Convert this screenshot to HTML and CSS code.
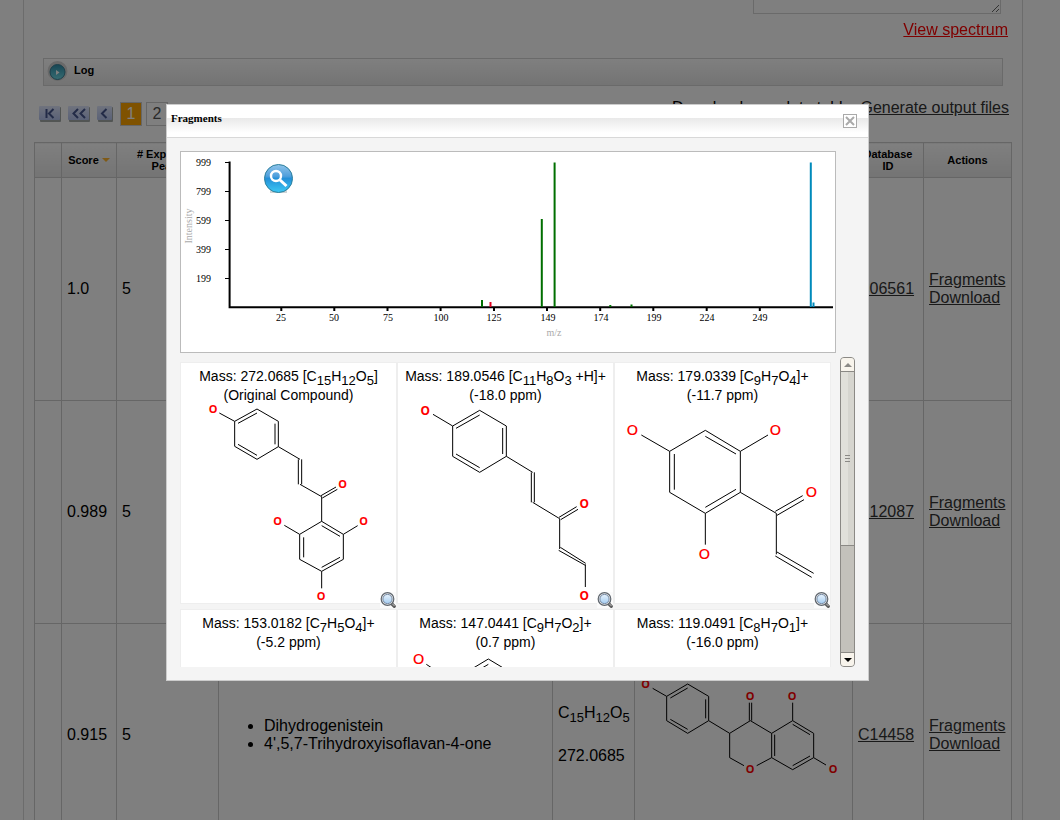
FILE: index.html
```html
<!DOCTYPE html>
<html lang="en">
<head>
<meta charset="utf-8">
<title>Fragments</title>
<link rel="stylesheet" href="styles.css">
</head>
<body>
<svg class="defs" width="0" height="0" aria-hidden="true">
  <defs>
    <linearGradient id="lensGlass" x1="0" y1="0" x2="0" y2="1"><stop offset="0" stop-color="#e8f3fd"/><stop offset="1" stop-color="#a5cdf1"/></linearGradient>
    <linearGradient id="blueBall" x1="0" y1="0" x2="0" y2="1"><stop offset="0" stop-color="#8fc4ea"/><stop offset=".42" stop-color="#4f9fdc"/><stop offset=".5" stop-color="#2490d8"/><stop offset="1" stop-color="#3cc8f4"/></linearGradient>
    <linearGradient id="tealBall" x1="0" y1="0" x2="0" y2="1"><stop offset="0" stop-color="#2c8ca8"/><stop offset="1" stop-color="#6fd8e4"/></linearGradient>
    <linearGradient id="navFill" x1="0" y1="0" x2="0" y2="1"><stop offset="0" stop-color="#dfe6fb"/><stop offset="1" stop-color="#b4c3ee"/></linearGradient>
    <symbol id="lens" viewBox="0 0 16 16">
      <rect width="16" height="16" fill="#fbfbfb"/>
      <path d="M11.500 11.500l2.800 2.800" stroke="#5d5d5d" stroke-width="3.200" stroke-linecap="round"/>
      <path d="M11.500 11l3 3" stroke="#c4c4c4" stroke-width="1"/>
      <circle cx="7.500" cy="7" r="6.300" fill="#eee" stroke="#5f666e" stroke-width="1.200"/>
      <circle cx="7.500" cy="7" r="4.600" fill="url(#lensGlass)" stroke="#7388a3" stroke-width="1"/>
    </symbol>
  </defs>
</svg>

<main class="page">
  <div class="entry"><textarea class="peaks" aria-label="Peak list"></textarea></div>
  <div class="spectrum-link"><a href="#spectrum">View spectrum</a></div>

  <button class="log" type="button">
    <svg width="22" height="22" viewBox="0 0 22 22" aria-hidden="true">
      <circle cx="10.500" cy="10" r="10" fill="#d2d2d2"/>
      <circle cx="10.500" cy="11" r="7.500" fill="url(#tealBall)" stroke="#3a7f96"/>
      <path d="M9 9l3.500 2.500L9 14z" fill="#fff"/>
    </svg>
    <span>Log</span>
  </button>

  <div class="toolbar">
    <nav class="pager" aria-label="Result pages">
      <button class="step" type="button" aria-label="First page"><svg width="22" height="16" viewBox="0 0 22 16"><rect x="1" y="1" width="21" height="15" rx="1" fill="#a4aaa9"/><rect width="21" height="14" rx="1" fill="url(#navFill)"/><path d="M7.500 3v9M14.500 3L10 7.500l4.500 4.500" fill="none" stroke="#46578f" stroke-width="2"/></svg></button>
      <button class="step" type="button" aria-label="Back ten pages"><svg width="22" height="16" viewBox="0 0 22 16"><rect x="1" y="1" width="21" height="15" rx="1" fill="#a4aaa9"/><rect width="21" height="14" rx="1" fill="url(#navFill)"/><path d="M10 3L5.500 7.500 10 12M17 3l-4.500 4.500L17 12" fill="none" stroke="#46578f" stroke-width="2"/></svg></button>
      <button class="step" type="button" aria-label="Previous page"><svg width="16" height="16" viewBox="0 0 16 16"><rect x="1" y="1" width="15" height="15" rx="1" fill="#a4aaa9"/><rect width="15" height="14" rx="1" fill="url(#navFill)"/><path d="M9.500 3L5 7.500 9.500 12" fill="none" stroke="#46578f" stroke-width="2"/></svg></button>
      <a class="num current" href="#p1">1</a>
      <a class="num" href="#p2">2</a>
    </nav>
    <div class="export">Download complete table: <a href="#output">Generate output files</a></div>
  </div>

  <table class="results">
    <colgroup><col class="c-mark"><col class="c-score"><col class="c-peaks"><col><col class="c-formula"><col class="c-structure"><col class="c-id"><col class="c-actions"></colgroup>
    <thead>
      <tr><th></th><th>Score <span class="sort"></span></th><th># Explained Peaks</th><th>Name</th><th>Formula</th><th>Structure</th><th>Database ID</th><th>Actions</th></tr>
    </thead>
    <tbody>
      <tr><td></td><td>1.0</td><td>5</td><td></td><td></td><td></td><td><a href="#c06561">C06561</a></td><td><a href="#f1">Fragments</a><br><a href="#d1">Download</a></td></tr>
      <tr><td></td><td>0.989</td><td>5</td><td></td><td></td><td></td><td><a href="#c12087">C12087</a></td><td><a href="#f2">Fragments</a><br><a href="#d2">Download</a></td></tr>
      <tr><td></td><td>0.915</td><td>5</td>
        <td><ul><li>Dihydrogenistein</li><li>4',5,7-Trihydroxyisoflavan-4-one</li></ul></td>
        <td><p>C<sub>15</sub>H<sub>12</sub>O<sub>5</sub></p><p>272.0685</p></td>
        <td class="drawing">
          <svg class="mol" viewBox="15 -138 651 666" role="img" aria-label="Dihydrogenistein structure">
            <path d="M68 55L110 79V152L173 190 236 152V79L173 42 110 79M121 84L173 54M121 148L173 178M227 88V145M236 152L299 190 361 152 425 190V263L380 287M299 190V263L342 287M358 98V152M365 98V152M434 194V258M425 190L488 152 551 190V263L488 299 425 263M488 163L540 194M488 287L540 258M488 98V152M551 263L588 285"/>
            <g class="bold"><text x="47" y="54">O</text><text x="360" y="90">O</text><text x="486" y="90">O</text><text x="360" y="309">O</text><text x="609" y="309">O</text></g>
          </svg>
        </td>
        <td><a href="#c14458">C14458</a></td><td><a href="#f3">Fragments</a><br><a href="#d3">Download</a></td></tr>
    </tbody>
  </table>
</main>

<div class="overlay">
  <section class="modal" role="dialog" aria-labelledby="title">
    <header class="modal-head">
      <h1 id="title">Fragments</h1>
      <button type="button" aria-label="Close"><svg width="14" height="14" viewBox="0 0 14 14"><rect x=".5" y=".5" width="13" height="13" fill="#fff" stroke="#aaa"/><path d="M3 3l8 8M11 3l-8 8" stroke="#aaa" stroke-width="2"/></svg></button>
    </header>
    <div class="modal-body">
      <div class="chart">
        <svg viewBox="181 152 654 200" role="img" aria-label="Spectrum, intensity against m/z">
          <g stroke="#000" stroke-width="2" fill="none">
            <path d="M229.600 161.500V308M228.600 307.300H833"/>
            <path d="M281.300 308v3M334.300 308v3M387.500 308v3M440.600 308v3M494 308v3M547 308v3M600.200 308v3M653.300 308v3M706.700 308v3M759.800 308v3"/>
            <path stroke-width="1" d="M225 162.500h4M225 191.500h4M225 220.500h4M225 249.500h4M225 278.500h4"/>
          </g>
          <g fill="none" stroke-width="2">
            <path stroke="#006f00" d="M482 300v7M541.800 219v88M554.600 162.500V307M610.300 305v2M631.500 304.500V307"/>
            <path stroke="#e00020" d="M490.500 302v5"/>
            <path stroke="#008abb" d="M810.800 162.500V307M813.500 302.500V307"/>
          </g>
          <g class="ticks">
            <text x="211" y="166">999</text><text x="211" y="195">799</text><text x="211" y="224">599</text><text x="211" y="253">399</text><text x="211" y="282">199</text>
          </g>
          <g class="marks">
            <text x="281" y="321">25</text><text x="334" y="321">50</text><text x="388" y="321">75</text><text x="441" y="321">100</text><text x="494" y="321">125</text><text x="548" y="321">149</text><text x="601" y="321">174</text><text x="654" y="321">199</text><text x="707" y="321">224</text><text x="760" y="321">249</text>
          </g>
          <g class="axis"><text x="554" y="336">m/z</text><text transform="translate(192 226) rotate(-90)">Intensity</text></g>
          <g>
            <rect x="270" y="190" width="17" height="3" fill="#d0d4d6"/>
            <circle cx="278.500" cy="178.500" r="14" fill="url(#blueBall)" stroke="#2c7f9c"/>
            <circle cx="276" cy="176" r="5" fill="none" stroke="#fff" stroke-width="2.400"/>
            <path d="M280 180l6.500 6" stroke="#fff" stroke-width="3"/>
          </g>
        </svg>
      </div>
      <div class="viewer">
        <div class="fragments">
          <article class="card">
            <h2>Mass: 272.0685 [C<sub>15</sub>H<sub>12</sub>O<sub>5</sub>]<br>(Original Compound)</h2>
            <svg class="mol" viewBox="33 150 645 594" role="img" aria-label="Structure">
              <path d="M148 174L194 199V274L261 313 325 275V199L261 162 194 199M204 205L261 174M204 268L261 301M315 206V268M325 275L390 313M385 313V388M395 313V388M390 388L455 425M453 422L498 396M457 429L502 403M455 425V499L389 538V613L455 649 520 613V538L455 499M455 512L510 544M455 637L510 607M401 547V607M389 538L343 511M520 538L563 512M455 649V700"/>
              <g class="bold"><text x="129" y="174">O</text><text x="518" y="399">O</text><text x="323" y="510">O</text><text x="581" y="510">O</text><text x="453" y="735">O</text></g>
            </svg>
            <button class="enlarge" type="button" aria-label="Enlarge structure"><svg width="16" height="16"><use href="#lens"/></svg></button>
          </article>
          <article class="card">
            <h2>Mass: 189.0546 [C<sub>11</sub>H<sub>8</sub>O<sub>3</sub> +H]+<br>(-18.0 ppm)</h2>
            <svg class="mol" viewBox="9 150 645 594" role="img" aria-label="Structure">
              <path d="M114 178L173 213V304L254 352 334 304V213L254 166 173 213M183 220L254 180M183 297L254 338M323 219V297M334 304L413 352M409 352V442M418 352V442M413 442L494 491M492 487L545 455M497 494L549 463M494 491V582M491 586L571 631M496 577L572 625M571 628V696"/>
              <g class="bold large"><text x="91" y="179">O</text><text x="568" y="458">O</text><text x="568" y="735">O</text></g>
            </svg>
            <button class="enlarge" type="button" aria-label="Enlarge structure"><svg width="16" height="16"><use href="#lens"/></svg></button>
          </article>
          <article class="card">
            <h2>Mass: 179.0339 [C<sub>9</sub>H<sub>7</sub>O<sub>4</sub>]+<br>(-11.7 ppm)</h2>
            <svg class="mol" viewBox="15 150 645 594" role="img" aria-label="Structure">
              <path d="M94 240L179 289V412L286 475 391 412V289L286 226 179 289M193 297V404M286 244L378 297M286 457L378 403M391 289L474 240M286 475V569M391 412L499 475M496 469L578 422M501 481L582 434M499 475V598M501 591L611 655M496 603L605 667"/>
              <g class="plain"><text x="67" y="240">O</text><text x="496" y="240">O</text><text x="604" y="426">O</text><text x="283" y="612">O</text></g>
            </svg>
            <button class="enlarge" type="button" aria-label="Enlarge structure"><svg width="16" height="16"><use href="#lens"/></svg></button>
          </article>
          <article class="card"><h2>Mass: 153.0182 [C<sub>7</sub>H<sub>5</sub>O<sub>4</sub>]+<br>(-5.2 ppm)</h2></article>
          <article class="card">
            <h2>Mass: 147.0441 [C<sub>9</sub>H<sub>7</sub>O<sub>2</sub>]+<br>(0.7 ppm)</h2>
            <svg class="mol" viewBox="714 186 645 594" role="img" aria-label="Structure">
              <path d="M799 223L875 273V400L985 465 1095 400V273L985 207 875 273M887 281L985 223M887 392L985 448M1082 281V392"/>
              <g class="plain light"><text x="776" y="222">O</text></g>
            </svg>
          </article>
          <article class="card"><h2>Mass: 119.0491 [C<sub>8</sub>H<sub>7</sub>O<sub>1</sub>]+<br>(-16.0 ppm)</h2></article>
        </div>
        <div class="scrollbar">
          <button class="up" type="button" aria-label="Scroll up"></button>
          <div class="thumb"><i></i><i></i><i></i></div>
          <div class="track"></div>
          <button class="down" type="button" aria-label="Scroll down"></button>
        </div>
      </div>
    </div>
  </section>
</div>
</body>
</html>
```

FILE: styles.css
```css
* { box-sizing: border-box; }

body {
  margin: 0;
  height: 100vh;
  overflow: hidden;
  background: #fff;
  color: #000;
  font: 16px/18px "Liberation Sans", Arial, sans-serif;
}

button { padding: 0; border: 0; background: none; display: block; }
button svg { display: block; }
a { color: #333; }
.defs { position: absolute; }

.page {
  margin: 0 37px 0 23px;
  padding: 0 10px;
  min-height: 100vh;
  border: 1px solid #d8d8d8;
  border-width: 0 1px;
}

.entry { display: flex; justify-content: flex-end; padding-right: 11px; }
.peaks {
  width: 248px;
  height: 14px;
  min-height: 0;
  padding: 0;
  border: 1px solid #d4d4d4;
  border-top: 0;
  background: #fff;
  resize: both;
}
.spectrum-link { margin-top: 7px; padding-right: 4px; text-align: right; }
.spectrum-link a { color: #f00; }

.log {
  display: flex;
  align-items: center;
  gap: 5px;
  width: calc(100% - 18px);
  height: 28px;
  margin: 19px 9px 0;
  padding: 0 3px;
  border: 1px solid #d4d4d4;
  background: linear-gradient(#fff, #e8e8e8);
  font: bold 11px/12px "Liberation Sans", Arial, sans-serif;
}
.log span { padding-bottom: 4px; }

.toolbar { display: flex; justify-content: space-between; margin: 16px 3px 0 5px; height: 24px; }
.pager { display: flex; align-items: center; gap: 4px; }
.step { margin-right: 3px; }
.num {
  width: 22px;
  height: 24px;
  border: 1px solid #ccc;
  color: #555;
  line-height: 22px;
  text-align: center;
  text-decoration: none;
}
.num.current { background: #ffa500; color: #fff; }
.export { line-height: 12px; }

.results { width: 100%; margin-top: 16px; table-layout: fixed; border-collapse: collapse; }
.results th, .results td { border: 1px solid #ccc; }
.results th {
  height: 35px;
  padding: 0 4px;
  background: linear-gradient(#fff, #e8e8e8);
  font-size: 11px;
  line-height: 12px;
}
.results td { height: 223px; padding: 0 5px; }
.c-mark { width: 27px; }
.c-score { width: 55px; }
.c-peaks { width: 102px; }
.c-formula { width: 82px; }
.c-structure { width: 218px; }
.c-id { width: 71px; }
.c-actions { width: 88px; }
.sort { display: inline-block; border: 4px solid transparent; border-top-color: #ffb52e; border-bottom: 0; vertical-align: 2px; }
.results td.drawing { padding: 0; }
.results ul { margin: 0; padding-left: 40px; }
.results p { margin: 0; line-height: 20px; }
.results p + p { margin-top: 23px; padding-bottom: 2px; }
sub { font-size: 13px; line-height: 0; }

.mol { display: block; width: 100%; overflow: visible; }
.mol path { fill: none; stroke: #000; stroke-width: 3; }
.mol text { fill: #f00; font-family: "Noto Sans", "Open Sans", sans-serif; text-anchor: middle; }
.mol .bold { font-size: 33px; font-weight: bold; }
.mol .bold.large { font-size: 36px; }
.mol .plain { font-size: 45px; font-weight: 500; }

.overlay {
  position: fixed;
  inset: 0;
  display: flex;
  justify-content: center;
  align-items: flex-start;
  padding: 104px 25px 0 0;
  background: rgba(0, 0, 0, .5);
}
.modal { width: 703px; border: 1px solid #ccc; background: #f4f4f4; }
.modal-head {
  display: flex;
  justify-content: space-between;
  align-items: flex-start;
  height: 33px;
  padding: 7px 11px 0 4px;
  border-bottom: 1px solid #d8d8d8;
  background: linear-gradient(#fff 13px, #e9e9e9 13px, #fff 28px);
}
.modal-head h1 { margin: 0; font: bold 11px/12px "Liberation Serif", "Times New Roman", serif; }
.modal-head button { margin-top: 2px; }
.modal-body { padding: 13px; }

.chart { margin-right: 19px; border: 1px solid #bbb; background: #fff; }
.chart svg { display: block; width: 100%; }
.chart text { font: 10px "Liberation Serif", "Times New Roman", serif; }
.ticks { text-anchor: end; }
.marks, .axis { text-anchor: middle; }
.axis { fill: #aaa; }

.viewer { display: flex; gap: 9px; height: 310px; margin-top: 4px; }
.fragments {
  flex: 1;
  display: grid;
  grid-template-columns: repeat(3, 1fr);
  grid-auto-rows: 242px;
  row-gap: 5px;
  padding-top: 5px;
  overflow: hidden;
}
.card { position: relative; padding-top: 4px; border: 1px solid #eee; background: #fff; }
.card h2 { margin: 0; font-size: 14px; font-weight: normal; line-height: 19px; text-align: center; white-space: nowrap; }
.enlarge { position: absolute; right: 0; bottom: -5px; z-index: 1; }

.scrollbar {
  display: flex;
  flex-direction: column;
  width: 15px;
  border: 1px solid #8b8985;
  border-radius: 4px;
  overflow: hidden;
  background: #c3c1bb;
}
.scrollbar button { height: 14px; width: 100%; background: #f8f4ec; display: grid; place-content: center; }
.scrollbar button::before { content: ""; border: 4px solid transparent; border-top: 0; border-bottom-color: #8b8985; }
.scrollbar .up { height: 13px; }
.scrollbar .down { border-top: 1px solid #8b8985; }
.scrollbar .down::before { border-top: 4px solid #000; border-bottom: 0; }
.thumb {
  display: flex;
  flex-direction: column;
  justify-content: center;
  align-items: center;
  gap: 2px;
  flex: 174;
  border: 1px solid #8b8985;
  border-width: 1px 0;
  background: linear-gradient(90deg, #e1e0da 50%, #d6d5cf 50%);
}
.thumb i { width: 5px; height: 1px; background: #8b8985; }
.track { flex: 107; }
```
